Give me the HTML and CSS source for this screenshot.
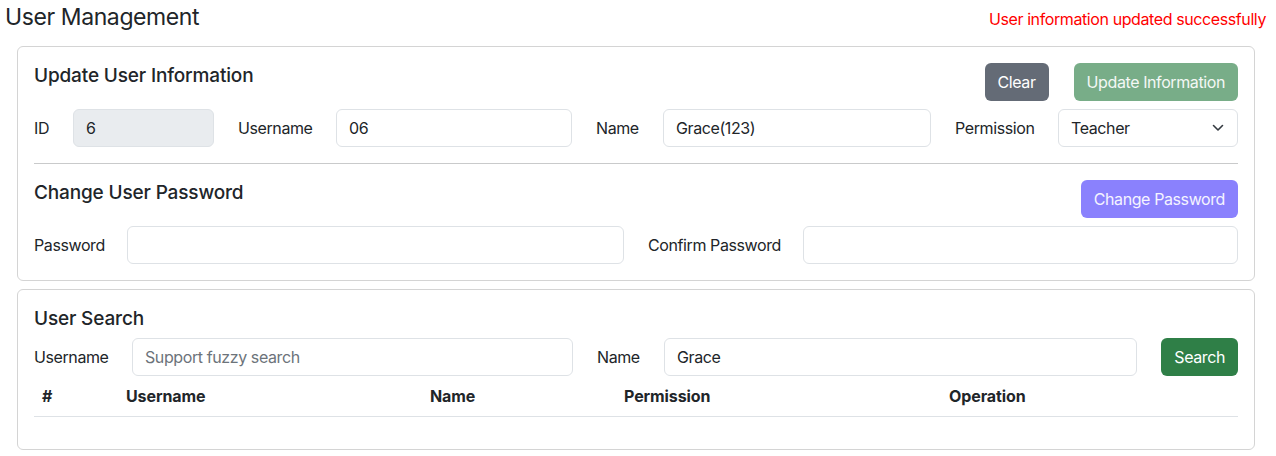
FILE: index.html
```html
<!DOCTYPE html>
<html lang="en">
<head>
<meta charset="utf-8">
<title>User Management</title>
<link rel="stylesheet" href="styles.css">
</head>
<body>
<header class="page-header">
  <h1 class="page-title">User Management</h1>
  <div class="status-msg">User information updated successfully</div>
</header>

<section class="card">
  <div class="section-head">
    <h2 class="section-title">Update User Information</h2>
    <div class="btn-group">
      <button class="btn btn-gray">Clear</button>
      <button class="btn btn-green-light">Update Information</button>
    </div>
  </div>
  <div class="form-row row-info">
    <label class="lbl">ID</label>
    <input class="field field-disabled" value="6" disabled>
    <label class="lbl">Username</label>
    <input class="field" value="06">
    <label class="lbl">Name</label>
    <input class="field" value="Grace(123)">
    <label class="lbl">Permission</label>
    <div class="select-wrap">
      <select class="field select"><option>Teacher</option></select>
      <svg class="chevron" width="12" height="8" viewBox="0 0 12 8"><polyline points="1.5,1.5 6,6 10.5,1.5" fill="none" stroke="#343a40" stroke-width="1.6" stroke-linecap="round" stroke-linejoin="round"/></svg>
    </div>
  </div>
  <hr class="divider">
  <div class="section-head">
    <h2 class="section-title">Change User Password</h2>
    <div class="btn-group">
      <button class="btn btn-purple">Change Password</button>
    </div>
  </div>
  <div class="form-row row-pass">
    <label class="lbl">Password</label>
    <input class="field" type="password">
    <label class="lbl">Confirm Password</label>
    <input class="field" type="password">
  </div>
</section>

<section class="card card-search">
  <h2 class="section-title search-title">User Search</h2>
  <div class="form-row row-search">
    <label class="lbl">Username</label>
    <input class="field" placeholder="Support fuzzy search">
    <label class="lbl">Name</label>
    <input class="field" value="Grace">
    <button class="btn btn-green">Search</button>
  </div>
  <table class="result-table">
    <colgroup>
      <col class="c1"><col class="c2"><col class="c3"><col class="c4"><col class="c5">
    </colgroup>
    <thead>
      <tr><th>#</th><th>Username</th><th>Name</th><th>Permission</th><th>Operation</th></tr>
    </thead>
    <tbody></tbody>
  </table>
</section>
</body>
</html>
```

FILE: styles.css
```css
* { box-sizing: border-box; }

body {
  margin: 0;
  font-family: Inter, "Noto Sans", "Liberation Sans", sans-serif;
  font-size: 16px;
  line-height: 24px;
  letter-spacing: -0.4px;
  color: #212529;
  background: #fff;
}

.page-header {
  display: flex;
  justify-content: space-between;
  align-items: flex-start;
  padding: 3px 10px 0 5px;
  height: 46px;
}

.page-title {
  margin: 0;
  font-size: 23px;
  font-weight: 400;
  line-height: 29px;
  letter-spacing: -0.4px;
}

.status-msg {
  color: #f00;
  font-size: 16px;
  line-height: 24px;
  margin-top: 4px;
}

.card {
  margin: 0 21px 0 17px;
  border: 1px solid #d4d4d4;
  border-radius: 6px;
  padding: 16px;
}

.card-search {
  margin-top: 8px;
}

.section-head {
  display: flex;
  justify-content: space-between;
  align-items: flex-start;
  margin-bottom: 8px;
}

.section-title {
  margin: 0;
  padding-top: 1px;
  font-size: 19px;
  font-weight: 500;
  line-height: 24px;
  letter-spacing: -0.15px;
}

.search-title {
  margin-bottom: 7px;
}

.btn-group {
  display: flex;
  gap: 25px;
}

.btn {
  font-family: inherit;
  font-size: 16px;
  line-height: 24px;
  letter-spacing: -0.4px;
  padding: 6px 12px;
  border: 1px solid transparent;
  border-radius: 6px;
  color: #fff;
  cursor: pointer;
}

.btn-gray { background: #646b76; }
.btn-green-light { background: #78ad88; color: #f4f8f5; }
.btn-purple { background: #8a81fd; color: #f5f4ff; }
.btn-green { background: #2f7f47; }

.form-row {
  display: grid;
  column-gap: 24px;
  align-items: center;
}

.row-info { grid-template-columns: 15px 141px 74px 236px 43px 268px 79px 1fr; }
.row-pass { grid-template-columns: 69px 497px 131px 1fr; }
.row-search { grid-template-columns: 74px 441px 43px 1fr auto; }

.lbl {
  white-space: nowrap;
}

.field {
  width: 100%;
  height: 38px;
  font-family: inherit;
  font-size: 16px;
  line-height: 24px;
  letter-spacing: -0.4px;
  color: #212529;
  padding: 6px 12px;
  border: 1px solid #dee2e6;
  border-radius: 6px;
  background: #fff;
  outline: none;
}

.field::placeholder { color: #6c737a; }

.field-disabled {
  background: #e9ecef;
  color: #212529;
  -webkit-text-fill-color: #212529;
  opacity: 1;
}

.select-wrap {
  position: relative;
}

.select {
  appearance: none;
  -webkit-appearance: none;
}

.chevron {
  position: absolute;
  right: 14px;
  top: 15px;
  pointer-events: none;
}

.divider {
  margin: 16px 0;
  border: 0;
  border-top: 1px solid #c9cacb;
}

.result-table {
  width: 100%;
  border-collapse: collapse;
  margin-bottom: 16px;
  table-layout: fixed;
}

.c1 { width: 84px; }
.c2 { width: 304px; }
.c3 { width: 194px; }
.c4 { width: 325px; }

.result-table th {
  text-align: left;
  font-weight: 700;
  letter-spacing: -0.1px;
  padding: 8px;
  border-bottom: 1px solid #dee2e6;
}
```
